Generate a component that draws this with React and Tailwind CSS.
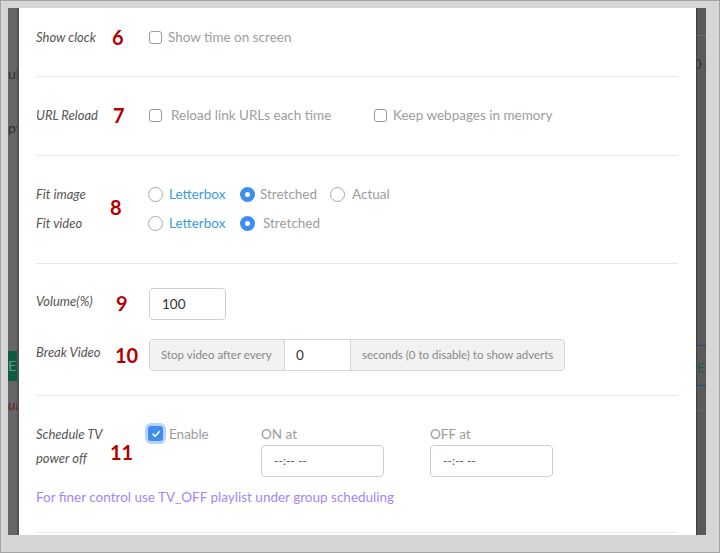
import React from "react";

const font = { fontFamily: "Lato, 'Open Sans', sans-serif" };

function Num({ n, cls }) {
  return (
    <div className={`text-[20px] font-bold leading-[24px] text-[#b30000] ${cls}`}>{n}</div>
  );
}

function Label({ children, cls = "" }) {
  return <div className={`italic text-[13px] text-[#555] ${cls}`}>{children}</div>;
}

function Check({ checked = false }) {
  if (checked) {
    return (
      <span className="w-[15px] h-[15px] rounded-[3px] bg-[#3d8ef0] flex items-center justify-center shadow-[0_0_0_3px_rgba(100,160,240,0.45)]">
        <svg width="10" height="10" viewBox="0 0 10 10">
          <path d="M2 5.2 L4.2 7.3 L8.2 2.8" fill="none" stroke="white" strokeWidth="1.6" strokeLinecap="round" strokeLinejoin="round" />
        </svg>
      </span>
    );
  }
  return <span className="w-[13px] h-[13px] rounded-[3px] border border-[#9a9a9a] bg-white block" />;
}

function Radio({ checked = false }) {
  if (checked) {
    return (
      <span className="w-[15px] h-[15px] rounded-full bg-[#3d8ef0] flex items-center justify-center">
        <span className="w-[5px] h-[5px] rounded-full bg-white" />
      </span>
    );
  }
  return <span className="w-[15px] h-[15px] rounded-full border border-[#a8a8a8] bg-white block" />;
}

const opt = "text-[13.5px] text-[#9d9d9d]";

export default function App() {
  return (
    <div style={font} className="w-[720px] h-[553px] bg-[#d6d6d6] border border-[#a3a3a3] pl-[7px] pt-[7px] pr-[13px] pb-[17px] flex overflow-hidden">
      {/* left backdrop strip */}
      <div className="w-[11px] h-full bg-[#666] border-r-2 border-[#525252] overflow-hidden flex flex-col">
        <div className="h-[56px]" />
        <div className="text-[14px] leading-[20px] text-[#2b2b2b] whitespace-nowrap">ul</div>
        <div className="h-[34px]" />
        <div className="text-[14px] leading-[20px] text-[#2b2b2b] whitespace-nowrap">py</div>
        <div className="h-[213px]" />
        <div className="h-[30px] bg-[#0f5a45] text-[14px] leading-[30px] text-[#6f9585] whitespace-nowrap">E</div>
        <div className="h-[14px]" />
        <div className="italic text-[14px] leading-[20px] text-[#6b1c1c] whitespace-nowrap">ul</div>
      </div>

      {/* modal */}
      <div className="flex-1 h-full bg-white pl-[17px] pr-[18px] overflow-hidden">
        {/* section 1 */}
        <div className="pt-[16px] pb-[26px] border-b border-[#e8e8e8] grid grid-cols-[72px_40px_1fr]">
          <Label cls="leading-[26px]">Show clock</Label>
          <Num n="6" cls="pl-[4px] mt-[1px]" />
          <div className="flex items-center h-[26px] pl-[1px]">
            <Check />
            <span className={`ml-[6px] ${opt}`}>Show time on screen</span>
          </div>
        </div>

        {/* section 2 */}
        <div className="pt-[25px] pb-[27px] border-b border-[#e8e8e8] grid grid-cols-[72px_40px_1fr]">
          <Label cls="leading-[26px]">URL Reload</Label>
          <Num n="7" cls="pl-[5px] mt-[1px]" />
          <div className="flex items-center h-[26px] pl-[1px]">
            <div className="w-[225px] flex items-center">
              <Check />
              <span className={`ml-[9px] ${opt}`}>Reload link URLs each time</span>
            </div>
            <Check />
            <span className={`ml-[6px] ${opt}`}>Keep webpages in memory</span>
          </div>
        </div>

        {/* section 3 */}
        <div className="pt-[25px] pb-[27px] border-b border-[#e8e8e8] grid grid-cols-[72px_40px_1fr]">
          <div className="flex flex-col gap-[3px]">
            <Label cls="leading-[26px]">Fit image</Label>
            <Label cls="leading-[26px]">Fit video</Label>
          </div>
          <div className="flex items-center">
            <Num n="8" cls="pl-[2px] -mt-[3px]" />
          </div>
          <div className="flex flex-col gap-[3px]">
            <div className="flex items-center h-[26px]">
              <div className="w-[92px] flex items-center">
                <Radio />
                <span className="ml-[6px] text-[13.5px] text-[#3a9be0]">Letterbox</span>
              </div>
              <div className="w-[90px] flex items-center">
                <Radio checked />
                <span className={`ml-[5px] ${opt}`}>Stretched</span>
              </div>
              <div className="flex items-center">
                <Radio />
                <span className={`ml-[7px] ${opt}`}>Actual</span>
              </div>
            </div>
            <div className="flex items-center h-[26px]">
              <div className="w-[92px] flex items-center">
                <Radio />
                <span className="ml-[6px] text-[13.5px] text-[#3a9be0]">Letterbox</span>
              </div>
              <div className="flex items-center">
                <Radio checked />
                <span className={`ml-[8px] ${opt}`}>Stretched</span>
              </div>
            </div>
          </div>
        </div>

        {/* section 4 */}
        <div className="pt-[24px] pb-[24px] border-b border-[#e8e8e8] flex flex-col gap-[19px]">
          <div className="grid grid-cols-[72px_40px_1fr]">
            <Label cls="leading-[20px] pt-[3px]">Volume(%)</Label>
            <Num n="9" cls="pl-[8px] pt-[3px]" />
            <div className="pl-[1px]">
              <div className="w-[77px] h-[32px] border border-[#cfcfcf] rounded-[4px] pl-[12px] flex items-center text-[13.5px] text-[#333]">100</div>
            </div>
          </div>
          <div className="grid grid-cols-[72px_40px_1fr]">
            <Label cls="leading-[20px] pt-[3px]">Break Video</Label>
            <Num n="10" cls="pl-[7px] pt-[4px]" />
            <div className="pl-[1px]">
              <div className="flex h-[32px] w-[416px] border border-[#d4d4d4] rounded-[4px] overflow-hidden">
                <div className="w-[135px] bg-[#f2f2f2] border-r border-[#d4d4d4] flex items-center pl-[11px] text-[11.5px] text-[#888] whitespace-nowrap">Stop video after every</div>
                <div className="w-[66px] bg-white border-r border-[#d4d4d4] flex items-center pl-[11px] text-[13.5px] text-[#333]">0</div>
                <div className="flex-1 bg-[#f2f2f2] flex items-center pl-[11px] text-[11.5px] text-[#888] whitespace-nowrap">seconds (0 to disable) to show adverts</div>
              </div>
            </div>
          </div>
        </div>

        {/* section 5 */}
        <div className="pt-[26px] pb-[25px] border-b border-[#e8e8e8]">
          <div className="grid grid-cols-[72px_40px_1fr]">
            <Label cls="leading-[24px] whitespace-nowrap">
              <div>Schedule TV</div>
              <div>power off</div>
            </Label>
            <Num n="11" cls="pl-[2px] pt-[18px]" />
            <div className="flex pt-[4px]">
              <div className="w-[113px] flex items-start">
                <Check checked />
                <span className={`ml-[6px] leading-[16px] ${opt}`}>Enable</span>
              </div>
              <div className="w-[169px] flex flex-col gap-[3px]">
                <span className={`leading-[16px] ${opt}`}>ON at</span>
                <div className="w-[123px] h-[32px] border border-[#cfcfcf] rounded-[4px] pl-[12px] flex items-center text-[12px] text-[#555]">--:-- --</div>
              </div>
              <div className="flex flex-col gap-[3px]">
                <span className={`leading-[16px] ${opt}`}>OFF at</span>
                <div className="w-[123px] h-[32px] border border-[#cfcfcf] rounded-[4px] pl-[12px] flex items-center text-[12px] text-[#555]">--:-- --</div>
              </div>
            </div>
          </div>
          <div className="mt-[10px] text-[13.5px] leading-[20px] text-[#a586f5]">For finer control use TV_OFF playlist under group scheduling</div>
        </div>
      </div>

      {/* right backdrop strip */}
      <div className="w-[10px] h-full bg-[#5a5a5a] border-l border-[#3e3e3e] overflow-hidden flex flex-col">
        <div className="h-[27px]" />
        <div className="h-[1px] bg-[#6c6c6c]" />
        <div className="h-[20px]" />
        <div className="text-[13px] leading-[16px] text-[#333] whitespace-nowrap -ml-[3px]">0 s</div>
        <div className="h-[273px]" />
        <div className="h-[1px] bg-[#1d4a6e]" />
        <div className="h-[14px]" />
        <div className="text-[14px] leading-[16px] text-[#1f5a45] whitespace-nowrap">Ex</div>
        <div className="h-[9px]" />
        <div className="h-[1px] bg-[#1d4a6e]" />
        <div className="h-[24px]" />
        <div className="h-[1px] bg-[#666]" />
      </div>
    </div>
  );
}
